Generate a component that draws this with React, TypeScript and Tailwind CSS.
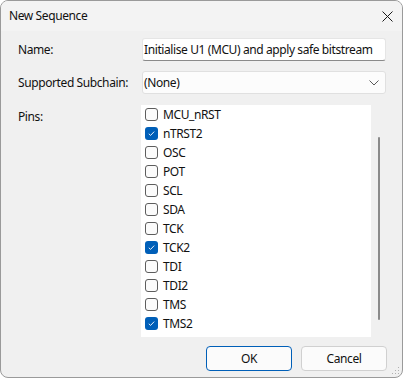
import React from "react";

const pins: { name: string; checked: boolean }[] = [
  { name: "MCU_nRST", checked: false },
  { name: "nTRST2", checked: true },
  { name: "OSC", checked: false },
  { name: "POT", checked: false },
  { name: "SCL", checked: false },
  { name: "SDA", checked: false },
  { name: "TCK", checked: false },
  { name: "TCK2", checked: true },
  { name: "TDI", checked: false },
  { name: "TDI2", checked: false },
  { name: "TMS", checked: false },
  { name: "TMS2", checked: true },
];

function Check({ checked }: { checked: boolean }) {
  if (checked) {
    return (
      <div className="w-[13px] h-[13px] rounded-[3px] bg-[#005fb8] flex items-center justify-center">
        <svg width="9" height="9" viewBox="0 0 9 9">
          <path d="M1.8 4.8 L3.6 6.4 L7.2 2.6" fill="none" stroke="#fff" strokeWidth="0.9" />
        </svg>
      </div>
    );
  }
  return <div className="w-[13px] h-[13px] rounded-[3px] border border-[#5d5d5d] bg-[#fbfbfb]" />;
}

export default function App() {
  return (
    <div
      className="w-[403px] h-[378px] bg-white text-[12px] text-[#111111] tracking-[-0.4px]"
      style={{ fontFamily: '"Segoe UI", "Noto Sans", sans-serif' }}
    >
      <div className="w-full h-full rounded-[8px] border border-[#9a9a9a] bg-[#f0f0f0] overflow-hidden flex flex-col relative">
        <div className="h-[30px] bg-[#f3f3f3] flex items-center justify-between pl-[8px] pr-[9px]">
          <span className="leading-none">New Sequence</span>
          <svg width="11" height="11" viewBox="0 0 11 11">
            <path d="M0.5 0.5 L10.5 10.5 M10.5 0.5 L0.5 10.5" stroke="#1a1a1a" strokeWidth="1" />
          </svg>
        </div>
        <div className="flex flex-col pl-[17px] pr-[16px] pt-[7px]">
          <div className="flex items-center h-[23px]">
            <span className="w-[124px]">Name:</span>
            <div className="w-[244px] h-[23px] bg-white border border-[#e5e5e5] border-b-[#8a8a8a] rounded-[3px] flex items-center pl-[1px]">
              <span className="whitespace-nowrap">Initialise U1 (MCU) and apply safe bitstream</span>
            </div>
          </div>
          <div className="flex items-center h-[23px] mt-[10px]">
            <span className="w-[124px]">Supported Subchain:</span>
            <div className="w-[244px] h-[23px] bg-[#fcfcfc] border border-[#e0e0e0] rounded-[3px] flex items-center justify-between pl-[1px] pr-[6px]">
              <span>(None)</span>
              <svg width="10" height="6" viewBox="0 0 10 6">
                <path d="M0.5 0.5 L5 5 L9.5 0.5" fill="none" stroke="#5a5a5a" strokeWidth="1" />
              </svg>
            </div>
          </div>
          <div className="flex mt-[11px]">
            <span className="w-[123px] pt-[3px]">Pins:</span>
            <div className="w-[230px] h-[232px] bg-white flex flex-col">
              {pins.map((p) => (
                <div key={p.name} className="h-[19px] flex items-center pl-[4px] gap-[5px]">
                  <Check checked={p.checked} />
                  <span className="leading-none">{p.name}</span>
                </div>
              ))}
            </div>
            <div className="w-[15px] flex flex-col items-center pt-[32px]">
              <div className="w-[2px] h-[183px] bg-[#8a8a8a] rounded-full ml-[1px]" />
            </div>
          </div>
          <div className="flex justify-end gap-[9px] mt-[9px] mr-[-1px]">
            <div className="w-[86px] h-[25px] rounded-[4px] border border-[#005fb8] bg-[#fbfbfb] flex items-center justify-center">
              OK
            </div>
            <div className="w-[86px] h-[25px] rounded-[4px] border border-[#d0d0d0] bg-[#fbfbfb] flex items-center justify-center">
              Cancel
            </div>
          </div>
        </div>
        <svg className="absolute right-[2px] bottom-[2px]" width="9" height="9" viewBox="0 0 9 9">
          <g fill="#b0b0b0">
            <rect x="7" y="1" width="1" height="1" />
            <rect x="4" y="4" width="1" height="1" />
            <rect x="7" y="4" width="1" height="1" />
            <rect x="1" y="7" width="1" height="1" />
            <rect x="4" y="7" width="1" height="1" />
            <rect x="7" y="7" width="1" height="1" />
          </g>
        </svg>
      </div>
    </div>
  );
}
